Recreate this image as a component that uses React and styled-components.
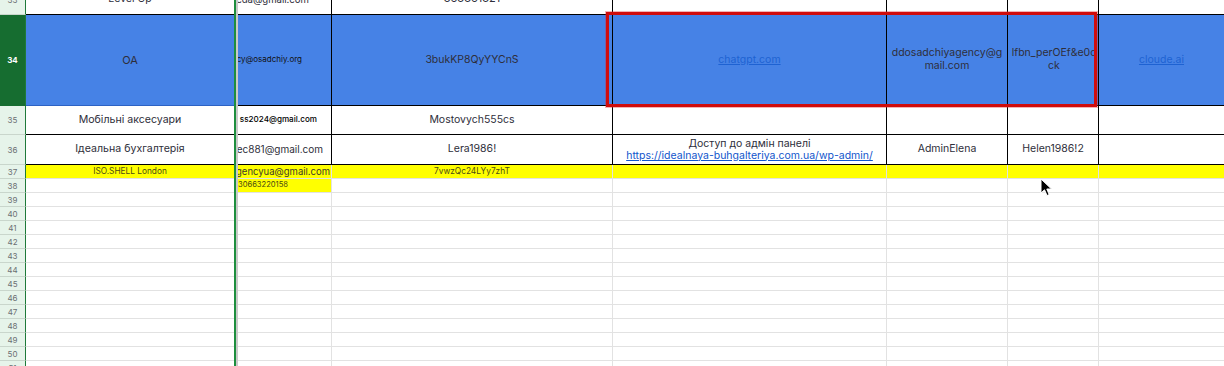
import React from 'react';
import styled, { createGlobalStyle } from 'styled-components';

const Global = createGlobalStyle`
  html, body { margin: 0; padding: 0; background: #fff; }
  body { overflow: hidden; }
`;

const FONT = `Inter, "Open Sans", "Noto Sans", sans-serif`;
const COLS = '26px 208px 4px 94px 281px 274px 121px 91px 125px';

const Sheet = styled.div`
  position: relative;
  width: 1224px;
  height: 366px;
  overflow: hidden;
  font-family: ${FONT};
`;

const Row = styled.div`
  display: grid;
  grid-template-columns: ${COLS};
  height: ${(p) => p.$h}px;
`;

const Head = styled.div`
  box-sizing: border-box;
  display: flex;
  align-items: ${(p) => (p.$cut ? 'flex-end' : 'center')};
  justify-content: center;
  overflow: hidden;
  background: ${(p) => (p.$active ? '#166d30' : '#e6f4ea')};
  color: ${(p) => (p.$active ? '#ffffff' : '#6b6f73')};
  font-family: ${FONT};
  font-size: 8px;
  font-weight: ${(p) => (p.$active ? 700 : 400)};
  border-right: 1px solid #1f7a3a;
  border-bottom: 1px solid ${(p) => (p.$active ? '#166d30' : '#c9d6cc')};
`;

const HeadLabel = styled.span`
  line-height: 8px;
  margin-bottom: ${(p) => (p.$cut ? '10px' : '0')};
`;

const Freeze = styled.div`
  background: linear-gradient(to right, #1e8e3e 0 2px, #c9c9c9 2px 4px);
`;

const Cell = styled.div`
  box-sizing: border-box;
  display: flex;
  align-items: ${(p) => p.$v || 'center'};
  justify-content: ${(p) => p.$h || 'center'};
  text-align: center;
  overflow: hidden;
  background: ${(p) => p.$bg || '#ffffff'};
  border-right: ${(p) => (p.$noRight ? '0' : `1px solid ${p.$dark ? '#000' : '#e2e2e2'}`)};
  border-bottom: 1px solid ${(p) => p.$bottom || '#e2e2e2'};
  padding: ${(p) => p.$pad || '0 3px'};
  font-family: ${FONT};
  font-size: ${(p) => p.$fs || 11}px;
  color: ${(p) => p.$color || '#2e2e3a'};
  line-height: ${(p) => p.$lh || 1.15};
  word-break: break-all;
`;

const Text = styled.span`
  white-space: ${(p) => (p.$wrap ? 'normal' : 'nowrap')};
  flex-shrink: 0;
  margin-bottom: ${(p) => p.$mb || 0}px;
  font-weight: ${(p) => p.$w || 400};
  max-width: ${(p) => (p.$wrap ? '100%' : 'none')};
`;

const Link = styled.a`
  color: ${(p) => p.$color || '#1155cc'};
  text-decoration: underline;
  white-space: nowrap;
`;

const Stack = styled.div`
  display: flex;
  flex-direction: column;
  align-items: center;
`;

const Selection = styled.div`
  position: absolute;
  left: 606px;
  top: 12px;
  width: 491px;
  height: 95px;
  box-sizing: border-box;
  border: 3px solid #d00c0c;
  box-shadow: 0 0 0 1px rgba(220, 40, 40, 0.35);
  pointer-events: none;
`;

const Cursor = styled.svg`
  position: absolute;
  left: 1040px;
  top: 178px;
`;

const BLUE = '#4682e6';
const YELLOW = '#ffff00';
const DARK = '#000';

function EmptyRow({ n }) {
  return (
    <Row $h={14}>
      <Head><HeadLabel>{n}</HeadLabel></Head>
      <Cell $noRight />
      <Freeze />
      <Cell />
      <Cell />
      <Cell />
      <Cell />
      <Cell />
      <Cell $noRight />
    </Row>
  );
}

export default function App() {
  const empties = [39, 40, 41, 42, 43, 44, 45, 46, 47, 48, 49, 50, 51];
  return (
    <>
      <Global />
      <Sheet>
        {/* row 33 (partly scrolled out) */}
        <Row $h={15}>
          <Head $cut><HeadLabel $cut>33</HeadLabel></Head>
          <Cell $noRight $bottom={DARK} $v="flex-end" $fs={10.5}><Text $mb={9}>Level Up</Text></Cell>
          <Freeze />
          <Cell $dark $bottom={DARK} $v="flex-end" $h="flex-end" $pad="0 22px 0 0" $fs={9.6}><Text $mb={9}>eda@gmail.com</Text></Cell>
          <Cell $dark $bottom={DARK} $v="flex-end"><Text $mb={9}>363361321</Text></Cell>
          <Cell $dark $bottom={DARK} />
          <Cell $dark $bottom={DARK} />
          <Cell $dark $bottom={DARK} />
          <Cell $noRight $bottom={DARK} />
        </Row>

        {/* row 34 */}
        <Row $h={91}>
          <Head $active><HeadLabel>34</HeadLabel></Head>
          <Cell $noRight $bg={BLUE} $bottom="#2d62c4" $fs={11}><Text>OA</Text></Cell>
          <Freeze />
          <Cell $dark $bg={BLUE} $bottom={DARK} $h="flex-end" $pad="0 29px 0 0" $fs={8} $color="#111">
            <Text>cy@osadchiy.org</Text>
          </Cell>
          <Cell $dark $bg={BLUE} $bottom={DARK} $fs={10.5}><Text>3bukKP8QyYYCnS</Text></Cell>
          <Cell $dark $bg={BLUE} $bottom={DARK} $fs={10.5}>
            <Link href="#" $color="#1e62d2">chatgpt.com</Link>
          </Cell>
          <Cell $dark $bg={BLUE} $bottom={DARK} $fs={10.5} $lh={1.2} $pad="0 2px">
            <Text $wrap>ddosadchiyagency@gmail.com</Text>
          </Cell>
          <Cell $dark $bg={BLUE} $bottom={DARK} $fs={10.5} $lh={1.2} $pad="0 1px 0 3px">
            <Text $wrap>lfbn_perOEf&amp;e0cck</Text>
          </Cell>
          <Cell $noRight $bg={BLUE} $bottom={DARK} $fs={10.5}>
            <Link href="#" $color="#1e62d2">cloude.ai</Link>
          </Cell>
        </Row>

        {/* row 35 */}
        <Row $h={29}>
          <Head><HeadLabel>35</HeadLabel></Head>
          <Cell $noRight $bottom={DARK} $fs={10.6}><Text>Мобільні аксесуари</Text></Cell>
          <Freeze />
          <Cell $dark $bottom={DARK} $h="flex-end" $pad="0 14px 0 0" $fs={8.1} $color="#000">
            <Text $w={500}>ss2024@gmail.com</Text>
          </Cell>
          <Cell $dark $bottom={DARK} $fs={10.5}><Text>Mostovych555cs</Text></Cell>
          <Cell $dark $bottom={DARK} />
          <Cell $dark $bottom={DARK} />
          <Cell $dark $bottom={DARK} />
          <Cell $noRight $bottom={DARK} />
        </Row>

        {/* row 36 */}
        <Row $h={30}>
          <Head><HeadLabel>36</HeadLabel></Head>
          <Cell $noRight $bottom={DARK} $fs={10.6}><Text>Ідеальна бухгалтерія</Text></Cell>
          <Freeze />
          <Cell $dark $bottom={DARK} $h="flex-end" $pad="0 8px 0 0" $fs={10}>
            <Text>ec881@gmail.com</Text>
          </Cell>
          <Cell $dark $bottom={DARK} $fs={10.5}><Text>Lera1986!</Text></Cell>
          <Cell $dark $bottom={DARK} $fs={10.5} $lh={1.1}>
            <Stack>
              <Text>Доступ до адмін панелі</Text>
              <Link href="#">https://idealnaya-buhgalteriya.com.ua/wp-admin/</Link>
            </Stack>
          </Cell>
          <Cell $dark $bottom={DARK} $fs={10.5}><Text>AdminElena</Text></Cell>
          <Cell $dark $bottom={DARK} $fs={10.5}><Text>Helen1986!2</Text></Cell>
          <Cell $noRight $bottom={DARK} />
        </Row>

        {/* row 37 */}
        <Row $h={14}>
          <Head><HeadLabel>37</HeadLabel></Head>
          <Cell $noRight $bg={YELLOW} $fs={8.3} $color="#4a4a14"><Text>ISO.SHELL London</Text></Cell>
          <Freeze />
          <Cell $bg={YELLOW} $h="flex-end" $pad="0 1px 0 0" $fs={9.5} $color="#3a3a2a" $v="flex-end">
            <Text>gencyua@gmail.com</Text>
          </Cell>
          <Cell $bg={YELLOW} $fs={8.3} $color="#4a4a14"><Text>7vwzQc24LYy7zhT</Text></Cell>
          <Cell $bg={YELLOW} />
          <Cell $bg={YELLOW} />
          <Cell $bg={YELLOW} />
          <Cell $noRight $bg={YELLOW} />
        </Row>

        {/* row 38 */}
        <Row $h={14}>
          <Head><HeadLabel>38</HeadLabel></Head>
          <Cell $noRight />
          <Freeze />
          <Cell $bg={YELLOW} $h="flex-end" $pad="0 43px 0 0" $fs={7.6} $color="#4a4a14">
            <Text>30663220158</Text>
          </Cell>
          <Cell />
          <Cell />
          <Cell />
          <Cell />
          <Cell $noRight />
        </Row>

        {empties.map((n) => (
          <EmptyRow key={n} n={n} />
        ))}

        <Selection />
        <Cursor width="13" height="20" viewBox="0 0 13 20">
          <path d="M1 1 L1 15 L4.5 11.8 L7 17.5 L9.2 16.6 L6.8 11 L11.5 11 Z" fill="#000" stroke="#fff" strokeWidth="1" strokeLinejoin="round" />
        </Cursor>
      </Sheet>
    </>
  );
}
